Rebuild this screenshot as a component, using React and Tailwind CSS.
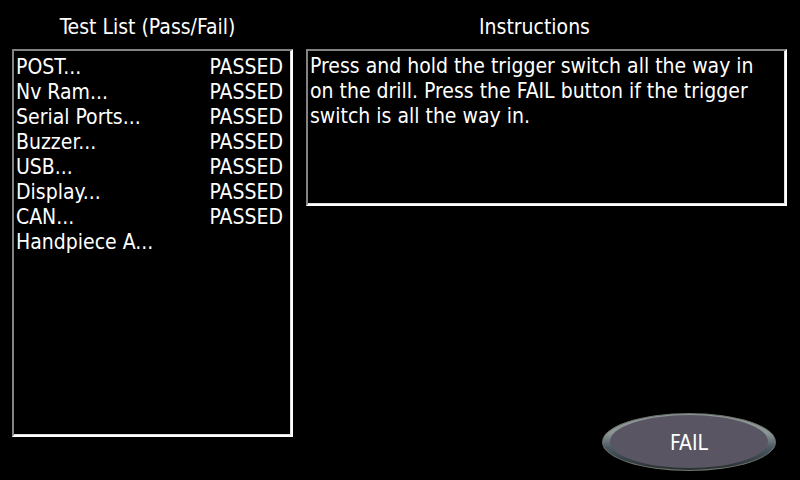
const tests = [
  { name: 'POST', result: 'PASSED' },
  { name: 'Nv Ram', result: 'PASSED' },
  { name: 'Serial Ports', result: 'PASSED' },
  { name: 'Buzzer', result: 'PASSED' },
  { name: 'USB', result: 'PASSED' },
  { name: 'Display', result: 'PASSED' },
  { name: 'CAN', result: 'PASSED' },
  { name: 'Handpiece A', result: '' },
];

function Bevel({ className, children }) {
  return (
    <div className="flex border-2 border-t-[#848284] border-l-[#848284] border-r-white border-b-white">
      <div className={`flex-1 border-r border-b border-[#dedfde] ${className}`}>{children}</div>
    </div>
  );
}

export default function App() {
  return (
    <main className="flex min-h-screen items-stretch gap-[13px] bg-black pt-3 pr-[13px] pl-3 font-['DejaVu_Sans_Condensed','Noto_Sans',sans-serif] text-[21px] leading-[25px] text-white">
      <section className="min-w-0 flex-[281]">
        <h1 className="mb-[9px] pt-[3px] pr-[10px] text-center">Test List (Pass/Fail)</h1>
        <Bevel className="min-h-[384px] py-1">
          <table className="w-full">
            <tbody>
              {tests.map((t) => (
                <tr key={t.name}>
                  <th scope="row" className="p-0 pl-[2px] text-left font-normal">{t.name}...</th>
                  <td className="p-0 pr-[7px] text-right">{t.result}</td>
                </tr>
              ))}
            </tbody>
          </table>
        </Bevel>
      </section>

      <section className="flex min-w-0 flex-[481] flex-col">
        <h2 className="mb-[9px] pt-[3px] pr-6 text-center">Instructions</h2>
        <Bevel className="min-h-[153px] pt-[3px] pr-5 pl-[2px]">
          <p>
            Press and hold the trigger switch all the way in on the drill. Press the FAIL button if the
            trigger switch is all the way in.
          </p>
        </Bevel>
        <button
          type="button"
          className="mt-auto mr-[11px] mb-[9px] h-[58px] w-[174px] self-end rounded-[50%] border border-[#6b716b] bg-linear-to-b from-[#8c9694] from-35% via-[#4a5963] via-60% to-[#293031] px-[7px] pt-px pb-[2px]"
        >
          <span className="flex h-full items-center justify-center rounded-[50%] bg-[#5a5563] pt-1">FAIL</span>
        </button>
      </section>
    </main>
  );
}
